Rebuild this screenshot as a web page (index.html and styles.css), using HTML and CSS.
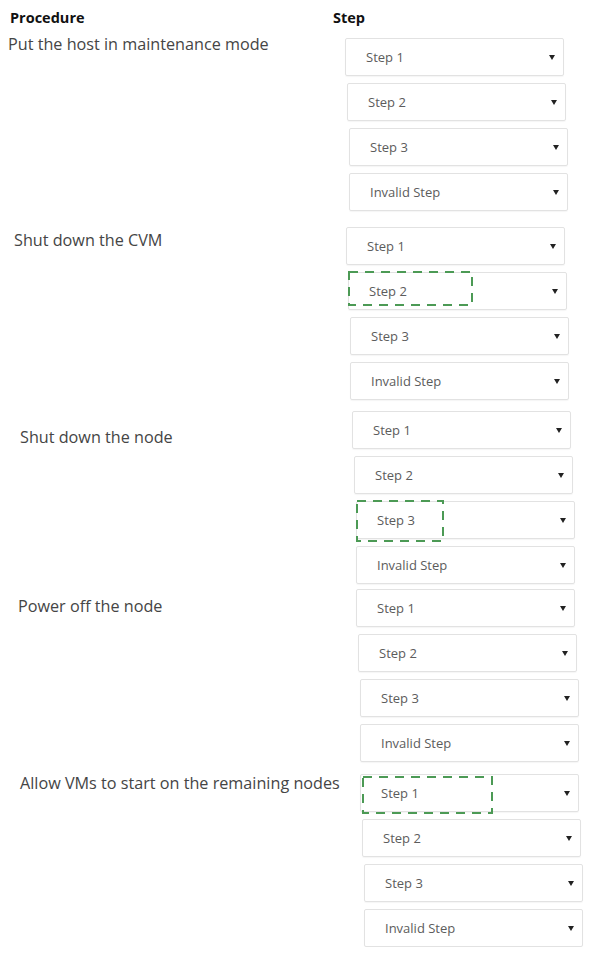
FILE: index.html
```html
<!DOCTYPE html>
<html lang="en">
<head>
<meta charset="UTF-8" />
<meta name="viewport" content="width=device-width, initial-scale=1" />
<title>Procedure steps</title>
<link rel="stylesheet" href="styles.css">
</head>
<body>

<div class="head">
  <span class="head-proc">Procedure</span>
  <span class="head-step">Step</span>
</div>

<div class="group g1">
  <div class="proc">Put the host in maintenance mode</div>
  <div class="steps">
    <div class="pick"><span>Step 1</span><i class="caret"></i></div>
    <div class="pick"><span>Step 2</span><i class="caret"></i></div>
    <div class="pick"><span>Step 3</span><i class="caret"></i></div>
    <div class="pick"><span>Invalid Step</span><i class="caret"></i></div>
  </div>
</div>

<div class="group g2">
  <div class="proc">Shut down the CVM</div>
  <div class="steps">
    <div class="pick"><span>Step 1</span><i class="caret"></i></div>
    <div class="pick"><span>Step 2</span><i class="caret"></i>
      <svg class="answer a2" preserveAspectRatio="none"><rect x="1" y="1" width="calc(100% - 2px)" height="calc(100% - 2px)" /></svg>
    </div>
    <div class="pick"><span>Step 3</span><i class="caret"></i></div>
    <div class="pick"><span>Invalid Step</span><i class="caret"></i></div>
  </div>
</div>

<div class="group g3">
  <div class="proc">Shut down the node</div>
  <div class="steps">
    <div class="pick"><span>Step 1</span><i class="caret"></i></div>
    <div class="pick"><span>Step 2</span><i class="caret"></i></div>
    <div class="pick"><span>Step 3</span><i class="caret"></i>
      <svg class="answer a3" preserveAspectRatio="none"><rect x="1" y="1" width="calc(100% - 2px)" height="calc(100% - 2px)" /></svg>
    </div>
    <div class="pick"><span>Invalid Step</span><i class="caret"></i></div>
  </div>
</div>

<div class="group g4">
  <div class="proc">Power off the node</div>
  <div class="steps">
    <div class="pick"><span>Step 1</span><i class="caret"></i></div>
    <div class="pick"><span>Step 2</span><i class="caret"></i></div>
    <div class="pick"><span>Step 3</span><i class="caret"></i></div>
    <div class="pick"><span>Invalid Step</span><i class="caret"></i></div>
  </div>
</div>

<div class="group g5">
  <div class="proc">Allow VMs to start on the remaining nodes</div>
  <div class="steps">
    <div class="pick"><span>Step 1</span><i class="caret"></i>
      <svg class="answer a5" preserveAspectRatio="none"><rect x="1" y="1" width="calc(100% - 2px)" height="calc(100% - 2px)" /></svg>
    </div>
    <div class="pick"><span>Step 2</span><i class="caret"></i></div>
    <div class="pick"><span>Step 3</span><i class="caret"></i></div>
    <div class="pick"><span>Invalid Step</span><i class="caret"></i></div>
  </div>
</div>

</body>
</html>
```

FILE: styles.css
```css
body {
  margin: 0;
  background: #fff;
  font-family: "Open Sans", "Noto Sans", sans-serif;
  color: #444;
  width: 594px;
}
.head {
  display: flex;
  height: 38px;
  box-sizing: border-box;
  padding-top: 8px;
  font-weight: bold;
  font-size: 14.5px;
  line-height: 20px;
  color: #111;
}
.head-proc {
  padding-left: 10px;
  width: 323px;
}
.group {
  display: grid;
  grid-template-columns: 340px auto;
}
.proc {
  font-size: 16.2px;
  line-height: 20px;
  color: #454545;
  white-space: nowrap;
}
.steps {
  display: flex;
  flex-direction: column;
  align-items: flex-start;
  gap: 7px;
}
.pick {
  position: relative;
  width: 219px;
  height: 38px;
  box-sizing: border-box;
  border: 1px solid #e2e2e2;
  border-radius: 2px;
  box-shadow: 0 1px 1px rgba(0,0,0,0.04);
  display: flex;
  align-items: center;
  justify-content: space-between;
  padding: 0 8px 0 20px;
  font-size: 13px;
  color: #5c5c5c;
}
.pick:nth-child(2) { margin-left: 2px; }
.pick:nth-child(3) { margin-left: 4px; }
.pick:nth-child(4) { margin-left: 4px; }
.caret {
  width: 0;
  height: 0;
  border-left: 3px solid transparent;
  border-right: 3px solid transparent;
  border-top: 5px solid #222;
}

/* per group offsets (scan drift) */
.g1 .proc { padding-left: 8px; margin-top: -4px; }
.g1 .steps { margin-left: 5px; }
.g2 { margin-top: 16px; }
.g2 .proc { padding-left: 14px; margin-top: 3px; }
.g2 .steps { margin-left: 6px; }
.g3 { margin-top: 11px; }
.g3 .proc { padding-left: 20px; margin-top: 16px; }
.g3 .steps { margin-left: 12px; }
.g4 { margin-top: 5px; }
.g4 .proc { padding-left: 18px; margin-top: 7px; }
.g4 .steps { margin-left: 16px; }
.g5 { margin-top: 12px; }
.g5 .proc { padding-left: 20px; margin-top: -1px; }
.g5 .steps { margin-left: 20px; }

/* dashed answer marker */
.answer {
  position: absolute;
  overflow: visible;
}
.answer rect {
  fill: none;
  stroke: #4c9a55;
  stroke-width: 2;
  stroke-dasharray: 9 7;
}
.a2 { left: -1px; top: -2px; width: 125px; height: 35px; }
.a3 { left: -1px; top: -2px; width: 88px; height: 42px; }
.a5 { left: 1px; top: 1px; width: 131px; height: 38px; }
```
